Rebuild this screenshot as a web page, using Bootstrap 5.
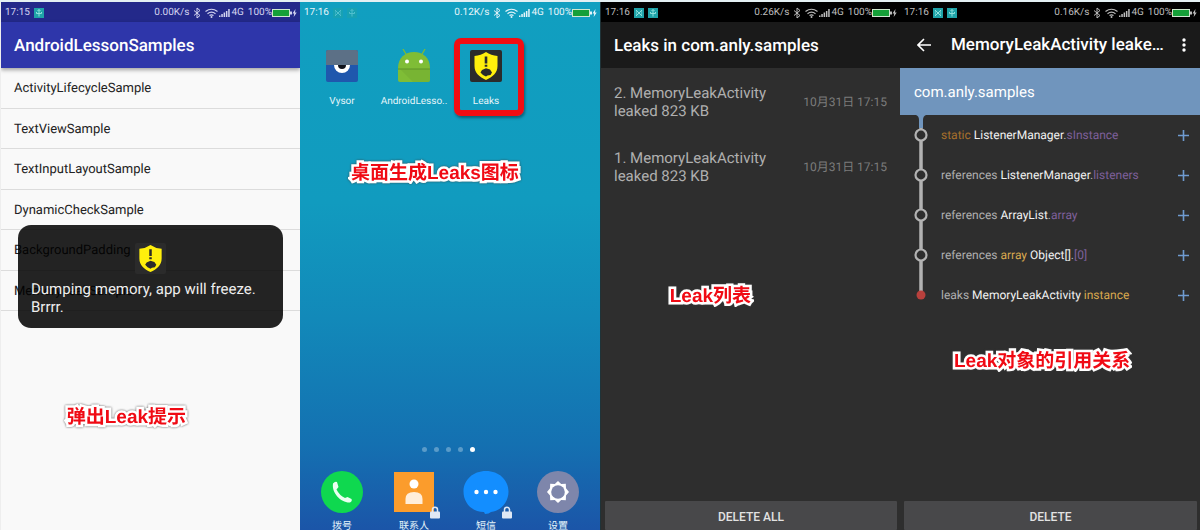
<!DOCTYPE html>
<html lang="zh-CN">
<head>
<meta charset="utf-8">
<meta name="viewport" content="width=device-width, initial-scale=1">
<title>LeakCanary</title>
<link href="https://cdn.jsdelivr.net/npm/bootstrap@5.3.0/dist/css/bootstrap.min.css" rel="stylesheet">
<style>
  body { font-family: Roboto, "Noto Sans CJK SC", sans-serif; background: #e4f0f3; text-rendering: geometricPrecision; }
  .stage { height: 100vh; min-height: 400px; padding-top: 2px; }
  .phone { overflow: hidden; }
  .phone svg { display: block; flex: none; }
  .status { height: 20px; padding: 1px 3px 0 4px; font-size: 10px; line-height: 19px; color: #ddd; }
  .title-bar { height: 46px; padding: 0 13px; font-size: 17px; line-height: 48px; font-weight: 500; color: #fff; margin: 0; }

  .samples { background: #f9f9f9; border-left: 1px solid #eee; }
  .samples .status { background: #23298a; color: #d3d4f0; }
  .samples .title-bar { background: #2e36aa; box-shadow: 0 2px 4px rgba(0,0,0,.35); z-index: 1; }
  .sample-list { display: grid; grid-template-rows: repeat(6, 1fr); height: 243px; margin: 0; padding: 0; list-style: none; }
  .sample-list li { display: flex; align-items: center; padding: 2px 13px 0; font-size: 13px; color: #222; border-bottom: 1px solid #dcdcdc; }
  .dump-toast { top: 223px; left: 17px; right: 17px; padding: 18px 13px 12px; border-radius: 13px; background: rgba(0,0,0,.86); color: #eee; font-size: 15px; line-height: 18px; }
  .dump-toast svg { margin: 0 auto 6px; }

  .home { background: linear-gradient(#119fc0 0%, #119bbf 38%, #1289b9 60%, #1470b1 84%, #1b55a8 100%); }
  .home .status, .home { color: #e6f5fa; }
  .apps { padding: 0 6px; font-size: 10px; line-height: 12px; }
  .apps a { color: inherit; text-decoration: none; }
  .launcher { padding-top: 27px; }
  .launcher span { margin-top: 13px; }
  .ring { left: 4px; right: -2px; top: -11px; height: 78px; border: 6px solid #f20d12; border-radius: 7px; box-shadow: 1px 2px 3px rgba(0,0,0,.4); }
  .pages { gap: 7px; margin-bottom: 18px; padding-right: 3px; }
  .pages i { width: 5px; height: 5px; border-radius: 50%; background: #5a9bc9; }
  .pages i.on { background: #fff; }
  .dock span { margin-top: 6px; height: 10px; line-height: 14px; }
  .lock { right: 9px; bottom: 11px; }

  .dark-screen { background: #2e2e2e; color: #b0b0b0; }
  .dark-screen .status { background: #000; color: #bdbdbd; }
  .dark-screen .title-bar { background: #1a1a1a; }
  .leaks { border-left: 1px solid #1f3338; }
  .leak-item { padding: 16px 13px 13px; font-size: 15px; line-height: 18px; }
  .leak-item time { font-size: 12px; color: #7c7c7c; }
  .wipe { height: 29px; margin: 0 3px 0 4px; padding-top: 3px; border: 0; border-radius: 1px; background: #48484a; color: #e2e2e2; font-size: 12px; font-weight: 500; }
  .package { height: 47px; line-height: 49px; padding: 0 14px; background: #7095bd; color: #fff; font-size: 15px; }
  .icon-btn { border: 0; padding: 0; background: none; color: #fff; }
  .title-text { margin-left: 20px; }
  .trace { height: 40px; padding: 0 11px 0 13px; font-size: 12px; }
  .trace .icon-btn { color: #6f9bd0; }
  .trace b { font-weight: 400; color: #f2f2f2; }
  .trace .field { color: #7e609b; }
  .trace .key { color: #d9a94e; }
  .trace .static { color: #a8702c; }

  .note { position: absolute; margin: 0; white-space: nowrap; font: 700 19px/28px "Liberation Sans", "Noto Sans CJK SC", sans-serif; color: #f00a14; -webkit-text-stroke: 5px #fff; paint-order: stroke fill; filter: drop-shadow(0 0 1px rgba(60,60,60,.8)); }
</style>
</head>
<body>
<svg class="d-none" aria-hidden="true">
  <symbol id="radio" viewBox="0 0 62 14">
    <path d="M1 4.500l6 5L4 12V2l3 2.500-6 5" fill="none" stroke="currentColor"/>
    <g fill="none" stroke="currentColor" stroke-width="1.200"><path d="M12.500 5.500q6-4.500 12 0M14.500 7.700q4-3 8 0M16.500 9.600q2-1.400 4 0"/></g>
    <circle cx="18.500" cy="11" r="1" fill="currentColor"/>
    <path d="M26 9.500h1.500V11H26zM28.300 8h1.500v3h-1.500zM30.600 6.500h1.500V11h-1.500zM32.900 5h1.500v6h-1.500zM35.200 3h1.500v8h-1.500z" fill="currentColor"/>
  </symbol>
  <symbol id="battery" viewBox="0 0 25 10">
    <rect x=".5" y="1.500" width="17" height="7" fill="#15a038" stroke="#cfe8cf"/>
    <path d="M18 3.500h2v3h-2zM23.500 1l-3 4.500h1.700L21.700 9l3-4.500H23z" fill="currentColor"/>
  </symbol>
  <symbol id="usb" viewBox="0 0 10 10">
    <rect width="10" height="10" fill="#1fa3a8"/>
    <path d="M5 1.500v7M3.500 3L5 1.500 6.500 3M2.500 4v1.500h5V4" fill="none" stroke="#8fe0dc"/>
  </symbol>
  <symbol id="cross" viewBox="0 0 10 10">
    <rect width="10" height="10" fill="#1fa3a8"/>
    <path d="M2 2l6 6M8 2L2 8M2 4h1M7 4h1M2 6h1M7 6h1" fill="none" stroke="#8fe0dc"/>
  </symbol>
  <symbol id="leak" viewBox="0 0 32 32">
    <rect width="32" height="32" rx="2" fill="#2b2b2b"/>
    <path d="M16 2q5 3.500 11.500 4v10c0 7-5 11-11.500 14C9.500 27 4.500 23 4.500 16V6Q11 5.500 16 2z" fill="#ffef0c"/>
    <path d="M14.700 6.500h2.600v7h-2.600zM14.700 14.700h2.600v2h-2.600zM10.500 22.500l1.500-2.500 4-1.700 4 1.200 2 3-1.500 2.500-3 .5-1.500 1-3-1.500z" fill="#2b2b2b"/>
  </symbol>
  <symbol id="padlock" viewBox="0 0 12 13">
    <path d="M3.500 6V3.800a2.500 2.500 0 0 1 5 0V6" fill="none" stroke="#dfe8f5" stroke-width="1.500"/>
    <rect x="1" y="5.500" width="10" height="7" rx="1" fill="#dfe8f5"/>
  </symbol>
  <symbol id="plus" viewBox="0 0 11 11"><path d="M5.500 0v11M0 5.500h11" stroke="currentColor" stroke-width="1.600"/></symbol>
  <symbol id="node" viewBox="0 0 16 40">
    <path d="M8 0v40" stroke="#b3b3b3" stroke-width="3.500"/>
    <circle cx="8" cy="20" r="5.500" fill="#2e2e2e" stroke="#b3b3b3" stroke-width="2.200"/>
  </symbol>
</svg>

<main class="stage container-fluid px-0">
  <div class="row g-0 h-100">

    <section class="phone samples col-3 h-100 d-flex flex-column position-relative">
      <div class="status d-flex align-items-center">
        <span>17:15</span><svg class="ms-1" width="10" height="10"><use href="#usb"/></svg>
        <span class="ms-auto">0.00K/s</span><svg class="ms-1" width="38" height="14" viewBox="0 0 38 14"><use href="#radio" width="62" height="14"/></svg>
        <span>4G</span><span class="ms-1">100%</span><svg width="25" height="10"><use href="#battery"/></svg>
      </div>
      <h1 class="title-bar">AndroidLessonSamples</h1>
      <ul class="sample-list">
        <li>ActivityLifecycleSample</li>
        <li>TextViewSample</li>
        <li>TextInputLayoutSample</li>
        <li>DynamicCheckSample</li>
        <li>BackgroundPadding</li>
        <li>MemoryLeakSample</li>
      </ul>
      <div class="dump-toast position-absolute" role="status">
        <svg width="31" height="31"><use href="#leak"/></svg>
        Dumping memory, app will freeze.<br>Brrrr.
      </div>
      <p class="note" style="left:22%;top:402px">弹出Leak提示</p>
    </section>

    <section class="phone home col-3 h-100 d-flex flex-column position-relative">
      <div class="status d-flex align-items-center">
        <span>17:16</span><svg class="ms-1 opacity-50" width="10" height="10"><use href="#cross"/></svg><svg class="ms-1 opacity-50" width="10" height="10"><use href="#usb"/></svg>
        <span class="ms-auto">0.12K/s</span><svg class="ms-1" width="38" height="14" viewBox="0 0 38 14"><use href="#radio" width="62" height="14"/></svg>
        <span>4G</span><span class="ms-1">100%</span><svg width="25" height="10"><use href="#battery"/></svg>
      </div>
      <nav class="apps launcher row row-cols-4 g-0">
        <a href="#" class="col d-flex flex-column align-items-center">
          <svg width="32" height="34" viewBox="0 0 32 34"><rect y="1" width="32" height="32" rx="2" fill="#1f57ad"/><path d="M2 1h28a2 2 0 0 1 2 2v13H0V3a2 2 0 0 1 2-2z" fill="#5c7086"/><path d="M8 16h16a8 8 0 0 1-16 0z" fill="#fff"/><path d="M12 16h8a4 4 0 0 1-8 0z" fill="#10131c"/></svg>
          <span>Vysor</span></a>
        <a href="#" class="col d-flex flex-column align-items-center">
          <svg width="34" height="34" viewBox="0 0 34 34"><path d="M6 0l4 7M28 0l-4 7" stroke="#7dbb35" stroke-width="1.300"/><path d="M1 19C1 9 8 3 17 3s16 6 16 16v12a2 2 0 0 1-2 2H3a2 2 0 0 1-2-2z" fill="#7fbd36"/><path d="M3 20l13 13h15a2 2 0 0 0 2-2V20z" fill="#6fa82f" opacity=".4"/><path d="M1 20h32" stroke="#5f9428"/><circle cx="10" cy="12.500" r="2" fill="#fff"/><circle cx="24" cy="12.500" r="2" fill="#fff"/></svg>
          <span>AndroidLesso..</span></a>
        <a href="#" class="col d-flex flex-column align-items-center position-relative">
          <svg width="32" height="34" viewBox="0 0 32 34"><use href="#leak" y="1" width="32" height="32"/></svg>
          <span>Leaks</span><i class="ring position-absolute"></i></a>
      </nav>
      <p class="note" style="left:17%;top:158px">桌面生成Leaks图标</p>
      <div class="pages d-flex justify-content-center align-items-center mt-auto"><i></i><i></i><i></i><i></i><i class="on"></i></div>
      <nav class="apps dock row row-cols-4 g-0">
        <a href="#" class="col d-flex flex-column align-items-center">
          <svg width="42" height="44" viewBox="0 0 42 44"><circle cx="21" cy="22" r="21" fill="#0fd84f"/><path d="M12 13.500q2-2.500 4-1.500l1.500 5-2 2.500q3 6 8.500 8.500l2.500-1 4 2q1 2-1.500 3.500C20 33 10.500 23 12 13.500z" fill="#e9fff0"/></svg>
          <span>拨号</span></a>
        <a href="#" class="col d-flex flex-column align-items-center position-relative">
          <svg width="40" height="44" viewBox="0 0 40 44"><rect y="2" width="40" height="40" fill="#fb9c2c"/><circle cx="20" cy="14" r="4.500" fill="#fff"/><path d="M11.500 34v-5q0-7 8.500-7t8.500 7v5z" fill="#ffeeda"/></svg>
          <svg class="lock position-absolute" width="12" height="13"><use href="#padlock"/></svg>
          <span>联系人</span></a>
        <a href="#" class="col d-flex flex-column align-items-center position-relative">
          <svg width="46" height="44" viewBox="0 0 46 44"><path d="M23 1c13 0 22.500 9 22.500 20.500S37 41 28 42q-2 2-6 2l-1-2C9 42 .5 33 .5 21.500S10 1 23 1z" fill="#138eff"/><g fill="#fff"><circle cx="13.500" cy="22" r="2.200"/><circle cx="23" cy="22" r="2.200"/><circle cx="32.500" cy="22" r="2.200"/></g></svg>
          <svg class="lock position-absolute" width="12" height="13"><use href="#padlock"/></svg>
          <span>短信</span></a>
        <a href="#" class="col d-flex flex-column align-items-center">
          <svg width="42" height="44" viewBox="0 0 42 44"><circle cx="21" cy="22" r="21" fill="#7e86ab"/><path d="M21 11l3.200 3 4.600-.2.200 4.500 3 3.700-3 3.500-.2 4.700-4.600-.2-3.200 3-3.200-3-4.600.2-.2-4.700-3-3.500 3-3.700.2-4.500 4.600.2z" fill="#fff"/><circle cx="21" cy="22" r="6.800" fill="#7e86ab"/></svg>
          <span>设置</span></a>
      </nav>
    </section>

    <section class="phone dark-screen leaks col-3 h-100 d-flex flex-column position-relative">
      <div class="status d-flex align-items-center">
        <span>17:16</span><svg class="ms-1" width="10" height="10"><use href="#cross"/></svg><svg class="ms-1" width="10" height="10"><use href="#usb"/></svg>
        <span class="ms-auto">0.26K/s</span><svg class="ms-1" width="38" height="14" viewBox="0 0 38 14"><use href="#radio" width="62" height="14"/></svg>
        <span>4G</span><span class="ms-1">100%</span><svg width="25" height="10"><use href="#battery"/></svg>
      </div>
      <h2 class="title-bar">Leaks in com.anly.samples</h2>
      <div class="leak-item d-flex justify-content-between align-items-center"><span>2. MemoryLeakActivity<br>leaked 823 KB</span><time>10月31日 17:15</time></div>
      <div class="leak-item d-flex justify-content-between align-items-center"><span>1. MemoryLeakActivity<br>leaked 823 KB</span><time>10月31日 17:15</time></div>
      <p class="note" style="left:23%;top:281px">Leak列表</p>
      <button type="button" class="wipe mt-auto">DELETE ALL</button>
    </section>

    <section class="phone dark-screen col-3 h-100 d-flex flex-column position-relative">
      <div class="status d-flex align-items-center">
        <span>17:16</span><svg class="ms-1" width="10" height="10"><use href="#cross"/></svg><svg class="ms-1" width="10" height="10"><use href="#usb"/></svg>
        <span class="ms-auto">0.16K/s</span><svg class="ms-1" width="38" height="14" viewBox="0 0 38 14"><use href="#radio" width="62" height="14"/></svg>
        <span>4G</span><span class="ms-1">100%</span><svg width="25" height="10"><use href="#battery"/></svg>
      </div>
      <div class="title-bar d-flex align-items-center">
        <button type="button" class="icon-btn ms-1" aria-label="Back"><svg width="14" height="14" viewBox="0 0 14 14"><path d="M14 7H1.500M7 1L1 7l6 6" fill="none" stroke="#fff" stroke-width="1.600"/></svg></button>
        <span class="title-text">MemoryLeakActivity leake…</span>
        <button type="button" class="icon-btn ms-auto" aria-label="More"><svg width="6" height="14" viewBox="0 0 6 14" fill="#fff"><circle cx="3" cy="2" r="1.700"/><circle cx="3" cy="7" r="1.700"/><circle cx="3" cy="12" r="1.700"/></svg></button>
      </div>
      <div class="package">com.anly.samples</div>
      <div class="trace d-flex align-items-center"><svg width="16" height="40"><use href="#node"/><path d="M3 0h10q-3 1-3 5v8H6V5q0-4-3-5z" fill="#7095bd"/></svg><span class="ms-2 ps-1"><span class="static">static</span> <b>ListenerManager</b>.<span class="field">sInstance</span></span><button type="button" class="icon-btn ms-auto" aria-label="Expand"><svg width="11" height="11"><use href="#plus"/></svg></button></div>
      <div class="trace d-flex align-items-center"><svg width="16" height="40"><use href="#node"/></svg><span class="ms-2 ps-1">references <b>ListenerManager</b>.<span class="field">listeners</span></span><button type="button" class="icon-btn ms-auto" aria-label="Expand"><svg width="11" height="11"><use href="#plus"/></svg></button></div>
      <div class="trace d-flex align-items-center"><svg width="16" height="40"><use href="#node"/></svg><span class="ms-2 ps-1">references <b>ArrayList</b>.<span class="field">array</span></span><button type="button" class="icon-btn ms-auto" aria-label="Expand"><svg width="11" height="11"><use href="#plus"/></svg></button></div>
      <div class="trace d-flex align-items-center"><svg width="16" height="40"><use href="#node"/></svg><span class="ms-2 ps-1">references <span class="key">array</span> <b>Object[]</b>.<span class="field">[0]</span></span><button type="button" class="icon-btn ms-auto" aria-label="Expand"><svg width="11" height="11"><use href="#plus"/></svg></button></div>
      <div class="trace d-flex align-items-center"><svg width="16" height="40"><path d="M8 0v18" stroke="#b3b3b3" stroke-width="3.500"/><circle cx="8" cy="20" r="4.500" fill="#b8403c"/></svg><span class="ms-2 ps-1">leaks <b>MemoryLeakActivity</b> <span class="key">instance</span></span><button type="button" class="icon-btn ms-auto" aria-label="Expand"><svg width="11" height="11"><use href="#plus"/></svg></button></div>
      <p class="note" style="left:18%;top:346px">Leak对象的引用关系</p>
      <button type="button" class="wipe mt-auto">DELETE</button>
    </section>

  </div>
</main>
<script src="https://cdn.jsdelivr.net/npm/bootstrap@5.3.0/dist/js/bootstrap.bundle.min.js"></script>
</body>
</html>
